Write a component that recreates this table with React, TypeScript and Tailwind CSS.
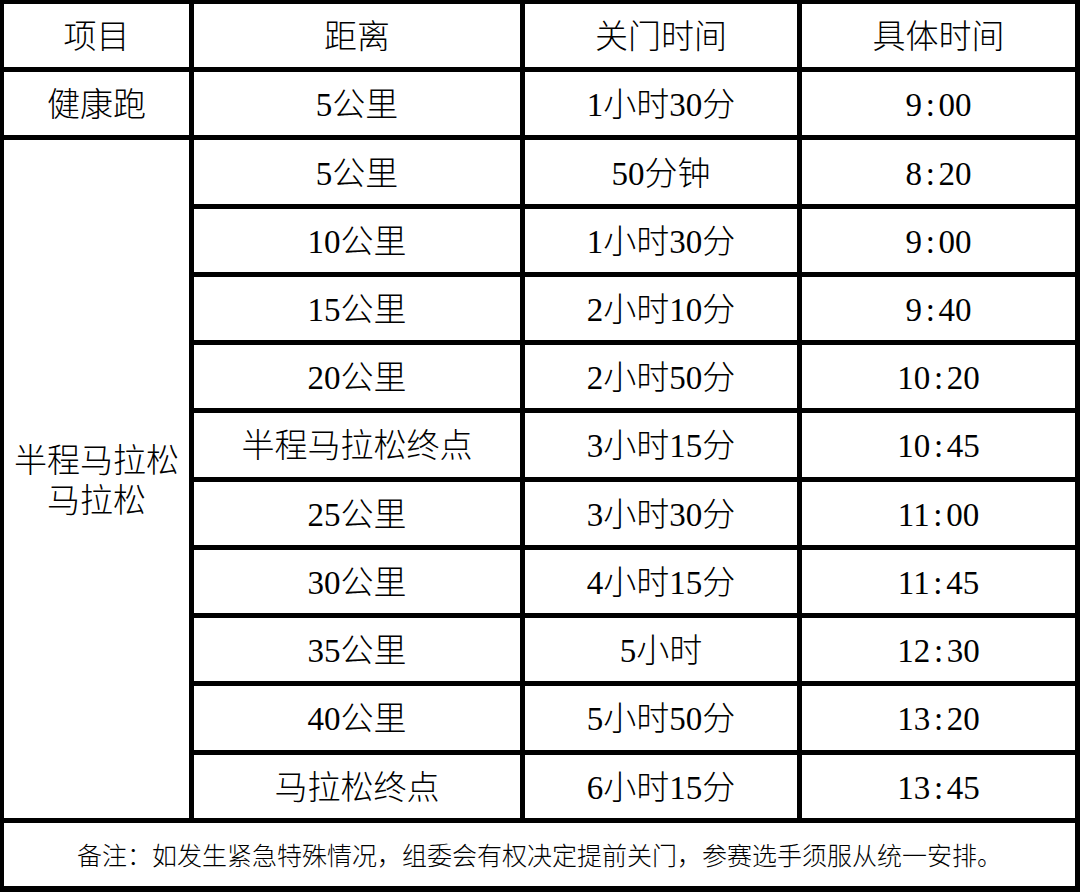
import type { ReactNode } from 'react';

const FONT = "font-['Liberation_Serif','Noto_Sans_CJK_SC',serif]";

const ROWS: [string, string, string][] = [
  ['5公里', '50分钟', '8:20'],
  ['10公里', '1小时30分', '9:00'],
  ['15公里', '2小时10分', '9:40'],
  ['20公里', '2小时50分', '10:20'],
  ['半程马拉松终点', '3小时15分', '10:45'],
  ['25公里', '3小时30分', '11:00'],
  ['30公里', '4小时15分', '11:45'],
  ['35公里', '5小时', '12:30'],
  ['40公里', '5小时50分', '13:20'],
  ['马拉松终点', '6小时15分', '13:45'],
];

/** 宋体里冒号是半角占位，这里撑到 0.5em */
function Time({ t }: { t: string }) {
  const [h, m] = t.split(':');
  return (
    <>
      {h}
      <span className="inline-block w-[0.5em] text-center">:</span>
      {m}
    </>
  );
}

function Cell({ children, className = '' }: { children: ReactNode; className?: string }) {
  return (
    <div className={`flex items-center justify-center bg-white pt-[4px] text-center ${className}`}>
      {children}
    </div>
  );
}

export default function App() {
  return (
    <div
      className={`grid h-[892px] w-[1080px] grid-cols-[185px_326px_272px_273px] grid-rows-[repeat(13,1fr)] gap-[5px] bg-black pt-[4px] pr-[5px] pb-[6px] pl-[4px] text-[33px] font-light leading-none text-black ${FONT}`}
    >
      <Cell>项目</Cell>
      <Cell>距离</Cell>
      <Cell>关门时间</Cell>
      <Cell>具体时间</Cell>

      <Cell>健康跑</Cell>
      <Cell>5公里</Cell>
      <Cell>1小时30分</Cell>
      <Cell>
        <Time t="9:00" />
      </Cell>

      <Cell className="row-span-10 flex-col leading-[40px]">
        <span>半程马拉松</span>
        <span>马拉松</span>
      </Cell>
      {ROWS.map(([d, c, t]) => (
        <div key={d} className="contents">
          <Cell>{d}</Cell>
          <Cell>{c}</Cell>
          <Cell>
            <Time t={t} />
          </Cell>
        </div>
      ))}

      <Cell className="col-span-4 text-[25px]">
        备注：如发生紧急特殊情况，组委会有权决定提前关门，参赛选手须服从统一安排。
      </Cell>
    </div>
  );
}
